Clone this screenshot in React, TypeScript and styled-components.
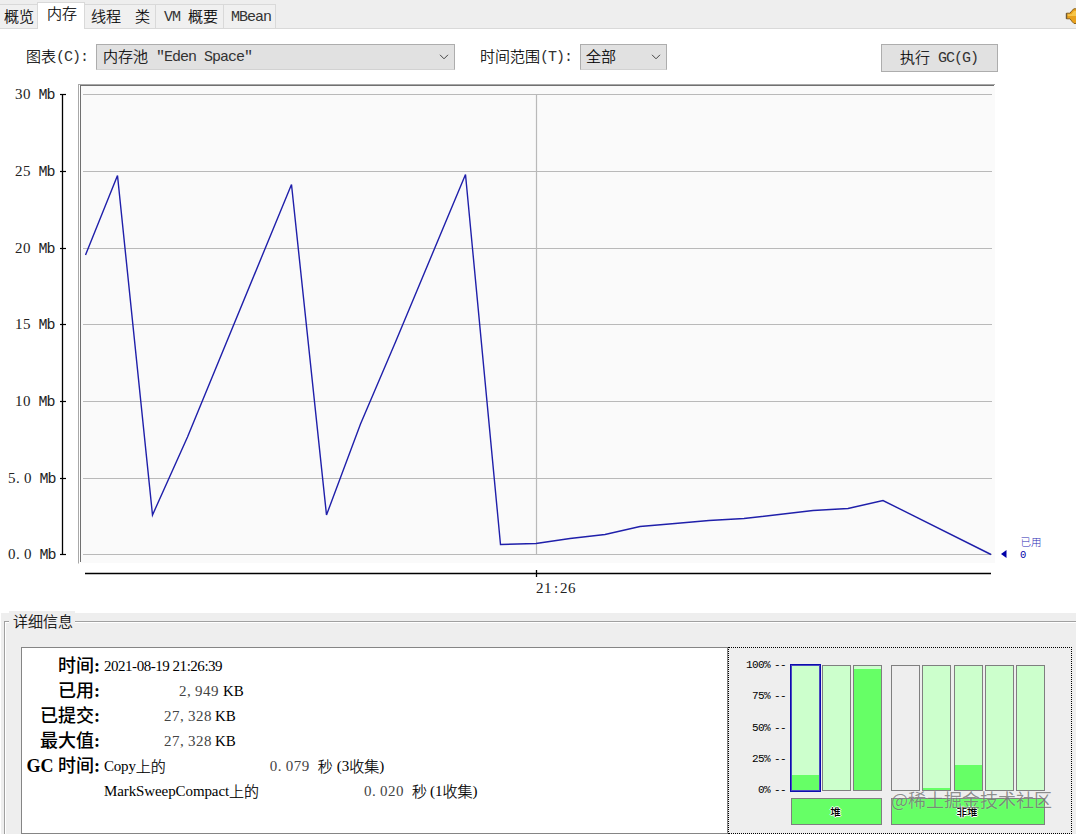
import React from "react";
import styled, { createGlobalStyle } from "styled-components";

const CJK = '"Noto Sans CJK SC", sans-serif';

const GlobalStyle = createGlobalStyle`
  * { box-sizing: border-box; }
  html, body { margin: 0; padding: 0; background: #fff; overflow: hidden; }
  body { font: 15px/20px "Liberation Mono", ${CJK}; color: #111; }
`;

const Window = styled.div`
  width: 1076px;
  height: 834px;
  display: flex;
  flex-direction: column;
  overflow: hidden;
`;

const Cjk = styled.span<{ $gap?: number }>`
  font: 300 15px/20px ${CJK};
  color: #000;
  -webkit-text-stroke: 0.2px #000;
  margin-right: ${(p) => p.$gap ?? 0}px;
  padding-bottom: 2px;
`;

const Latin = styled.span`
  font: 15px/20px "Liberation Mono", monospace;
  letter-spacing: -1px;
  color: #333;
  white-space: pre;
  padding-top: 2px;
`;

const TabBar = styled.div`
  height: 29px;
  flex: none;
  display: flex;
  align-items: flex-end;
  background: #eeeeee;
  border-bottom: 1px solid #d9d9d9;
`;

const Tab = styled.div<{ $width: number; $pad: number; $line?: boolean }>`
  width: ${(p) => p.$width}px;
  height: 24px;
  padding-left: ${(p) => p.$pad}px;
  display: flex;
  align-items: center;
  white-space: pre;
  background: #f0f0f0;
  border-top: 1px solid #d9d9d9;
  border-right: ${(p) => (p.$line ? "1px solid #d9d9d9" : "none")};
`;

const ActiveTab = styled.div`
  width: 48px;
  height: 27px;
  margin-bottom: -1px;
  padding: 0 0 0 9px;
  background: #fff;
  border: 1px solid #d9d9d9;
  border-bottom: none;
`;

const Speaker = styled.svg`
  margin-left: auto;
  margin-bottom: 3px;
  display: block;
`;

const Controls = styled.div`
  height: 55px;
  flex: none;
  display: flex;
  align-items: flex-start;
  padding: 15px 0 0 26px;
`;

const Caption = styled.label<{ $width: number }>`
  width: ${(p) => p.$width}px;
  height: 26px;
  display: flex;
  align-items: center;
`;

const Combo = styled.div<{ $width: number; $gap: number; $pad: number }>`
  width: ${(p) => p.$width}px;
  height: 26px;
  margin-right: ${(p) => p.$gap}px;
  padding: 0 5px 0 ${(p) => p.$pad}px;
  display: flex;
  align-items: center;
  justify-content: space-between;
  background: #e1e1e1;
  border: 1px solid #adadad;
  border-bottom-color: #d2d2d2;
`;

const ComboText = styled.span`
  display: flex;
  align-items: center;
`;

const GcButton = styled.button`
  width: 117px;
  height: 28px;
  padding: 0 1px 0 0;
  display: flex;
  align-items: center;
  justify-content: center;
  background: #e1e1e1;
  border: 1px solid #adadad;
`;

const Chart = styled.svg`
  display: block;
  flex: none;
`;

const Lower = styled.section`
  height: 221px;
  flex: none;
  margin-left: 1px;
  padding: 8px 0 0 3px;
  background: #eeeeee;
`;

const Group = styled.div`
  height: 213px;
  padding: 0 4px 0 16px;
  border-top: 1px solid #a0a0a0;
  border-left: 1px solid #a0a0a0;
  box-shadow: inset 1px 1px 0 #fff;
`;

const GroupTitle = styled.div`
  width: 66px;
  height: 18px;
  margin: -11px 0 0 -12px;
  padding-left: 4px;
  line-height: 18px;
  background: #eeeeee;
  white-space: nowrap;
`;

const GroupBody = styled.div`
  margin-top: 18px;
  display: flex;
`;

const Details = styled.div`
  width: 707px;
  height: 187px;
  padding: 6px 0 0 4px;
  background: #fff;
  border: 1px solid #858585;
`;

const Row = styled.div`
  height: 25px;
  display: flex;
  align-items: center;
`;

const RowLabel = styled.div`
  width: 74px;
  margin-right: 4px;
  padding-bottom: 2px;
  display: flex;
  align-items: center;
  justify-content: flex-end;
  white-space: pre;
  font: 700 18px/24px "Liberation Serif", "Noto Sans CJK SC", serif;
  color: #000;
`;

const LabelCjk = styled.span`
  font: 500 18px/24px ${CJK};
  padding-bottom: 3px;
`;

const Serif = styled.span<{ $tight?: number }>`
  font: 15px/24px "Liberation Serif", serif;
  letter-spacing: ${(p) => p.$tight ?? 0}px;
  padding-bottom: 1px;
  color: #000;
`;

const Digits = styled.span<{ $left: number; $gap: number }>`
  margin-left: ${(p) => p.$left}px;
  margin-right: ${(p) => p.$gap}px;
  padding-bottom: 1px;
  display: flex;
  font: 15px/24px "Liberation Serif", serif;
  color: #444;
`;

const Digit = styled.span`
  width: 8px;
`;

const Pools = styled.div`
  position: relative;
  width: 344px;
  height: 187px;
  padding: 16px 0 0 16px;
  display: flex;
  border: 1px dotted #000;
`;

const Scale = styled.div`
  width: 46px;
  height: 144px;
  margin-top: -8px;
`;

const ScaleMark = styled.div`
  height: 31.25px;
  display: flex;
  justify-content: flex-end;
  padding-right: 5px;
  font: 11px/18px "Liberation Mono", monospace;
  letter-spacing: -0.6px;
  white-space: nowrap;
  color: #000;
`;

const ScaleDash = styled.span`
  margin-left: 4px;
  white-space: nowrap;
`;

const PoolGroup = styled.div<{ $width: number }>`
  width: ${(p) => p.$width}px;
  margin: 1px 9px 0 0;
`;

const Bars = styled.div`
  height: 126px;
  display: flex;
  justify-content: space-between;
`;

const Bar = styled.div<{ $empty?: boolean; $selected?: boolean }>`
  position: relative;
  z-index: ${(p) => (p.$selected ? 1 : 0)};
  width: 29px;
  height: 126px;
  display: flex;
  align-items: flex-end;
  border: 1px solid ${(p) => (p.$selected ? "#4a4ac0" : "#7f7f7f")};
  background: ${(p) => (p.$empty ? "#eeeeee" : "#ccffcc")};
  box-shadow: ${(p) => (p.$selected ? "0 0 0 1px #0c0cae" : "none")};
`;

const Fill = styled.div`
  width: 100%;
  background: #66ff66;
`;

const PoolLabel = styled.div`
  height: 27px;
  margin-top: 7px;
  padding-right: 2px;
  display: flex;
  align-items: center;
  justify-content: center;
  background: #66ff66;
  border: 1px solid #7f7f7f;
  font: 500 10.5px/12px ${CJK};
  color: #000;
  text-shadow: 1px 0 #fff, -1px 0 #fff, 0 1px #fff, 0 -1px #fff;
`;

const Watermark = styled.div`
  position: absolute;
  left: 162px;
  top: 139px;
  font: 400 18px/24px ${CJK};
  white-space: nowrap;
  color: rgba(70, 70, 70, 0.6);
  text-shadow: 0 0 1px rgba(255, 255, 255, 0.6);
`;

const Chevron = () => (
  <svg width="10" height="6" viewBox="0 0 10 6" fill="none" stroke="#444">
    <path d="M1 0.8 5 4.8 9 0.8" />
  </svg>
);

const gridY = [94.5, 171.5, 248.5, 324.5, 401.5, 478.5, 554.5];
const ticks = ["30", "25", "20", "15", "10", "5.0", "0.0"];
const series =
  "85.5,255 117.5,175.5 152.5,515 187.5,437 291.5,184.5 326.5,515 360.5,424 395.5,342 465.5,174.5 500.5,544.5 536,543.5 570,538.5 605,534.5 640,526.5 675,523.5 709,520.5 744,518.5 779,514.5 813,510.5 848,508.5 883,500.5 991,554.5";

const MemoryChart = () => (
  <Chart width="1076" height="529" viewBox="0 84 1076 529">
    <rect x="81" y="86" width="914" height="477" fill="#fafafa" />
    <path d="M78 84.5H995M78.5 84V563.5" stroke="#a8a8a8" />
    <path d="M80 85.5H994M80.5 85V562" stroke="#707070" />
    {gridY.map((y) => (
      <path key={y} d={`M83 ${y}H992`} stroke="#b9b9b9" strokeWidth="1.2" />
    ))}
    <path d="M536.5 94V554" stroke="#b9b9b9" strokeWidth="1.2" />
    <path d="M62.5 94V555" stroke="#000" strokeWidth="1.3" />
    {gridY.map((y) => (
      <path key={y} d={`M60 ${y}H66`} stroke="#000" strokeWidth="1.2" />
    ))}
    {ticks.map((t, i) => {
      const x0 = t.length === 2 ? 15 : 8;
      const xs = t.split("").map((_, n) => x0 + n * 8).join(" ");
      return (
        <g key={t} fill="#222">
          <text x={xs} y={gridY[i] + 4.5} fontFamily="Liberation Serif" fontSize="15">
            {t}
          </text>
          <text
            x={x0 + t.length * 8 + 7.5}
            y={gridY[i] + 4.5}
            fontFamily="Liberation Mono"
            fontSize="15"
            letterSpacing="-1"
          >
            Mb
          </text>
        </g>
      );
    })}
    <path d="M85 573.5H991M536.5 570V577" stroke="#000" strokeWidth="1.3" />
    <text x="536 544 554 560 568" y="593" fontFamily="Liberation Serif" fontSize="15" fill="#222">
      21:26
    </text>
    <polyline points={series} fill="none" stroke="#1f1faa" strokeWidth="1.4" />
    <path d="M1001 554 1006.5 550V558Z" fill="#0000a8" />
    <text x="1020.5" y="545.5" fontFamily="Noto Sans CJK SC" fontWeight="300" fontSize="10.5" fill="#2a2ab4">
      已用
    </text>
    <text x="1020" y="558" fontFamily="Liberation Mono" fontSize="10.5" fill="#0000a8">
      0
    </text>
  </Chart>
);

const Number = ({ value, left, gap }: { value: string; left: number; gap: number }) => (
  <Digits $left={left} $gap={gap}>
    {value.split("").map((c, i) => (
      <Digit key={i}>{c}</Digit>
    ))}
  </Digits>
);

const Label = ({ latin, text }: { latin?: string; text: string }) => (
  <RowLabel>
    {latin}
    <LabelCjk>{text}</LabelCjk>:
  </RowLabel>
);

const Pool = ({ level, empty, selected }: { level: number; empty?: boolean; selected?: boolean }) => (
  <Bar $empty={empty} $selected={selected}>
    <Fill style={{ height: level }} />
  </Bar>
);

export default function App() {
  return (
    <Window>
      <GlobalStyle />
      <TabBar>
        <Tab $width={37} $pad={4}><Cjk>概览</Cjk></Tab>
        <ActiveTab><Cjk>内存</Cjk></ActiveTab>
        <Tab $width={49} $pad={6}><Cjk>线程</Cjk></Tab>
        <Tab $width={22} $pad={1} $line><Cjk>类</Cjk></Tab>
        <Tab $width={68} $pad={8} $line><Latin>VM </Latin><Cjk>概要</Cjk></Tab>
        <Tab $width={52} $pad={7} $line><Latin>MBean</Latin></Tab>
        <Speaker width="11" height="18" viewBox="0 0 11 18">
          <path d="M1.5 6.2H5L7 3.5 9 1.8H13V16.5H9L7 14.5 5 11.8H1.5Z" fill="#e9a11c" stroke="#8a6420" />
          <path d="M2.5 7.2H6.5L9 4H11V9H2.5Z" fill="#f7c64a" />
          <path d="M1.5 6.2V11.8" stroke="#6e5a3a" strokeWidth="1.4" />
        </Speaker>
      </TabBar>
      <Controls>
        <Caption $width={70}><Cjk>图表</Cjk><Latin>(C):</Latin></Caption>
        <Combo $width={359} $gap={25} $pad={6}>
          <ComboText><Cjk>内存池</Cjk><Latin>{' "Eden Space"'}</Latin></ComboText>
          <Chevron />
        </Combo>
        <Caption $width={100}><Cjk>时间范围</Cjk><Latin>(T):</Latin></Caption>
        <Combo $width={87} $gap={214} $pad={5}>
          <Cjk>全部</Cjk>
          <Chevron />
        </Combo>
        <GcButton><Cjk>执行</Cjk><Latin>{" GC(G)"}</Latin></GcButton>
      </Controls>
      <MemoryChart />
      <Lower>
        <Group>
          <GroupTitle><Cjk>详细信息</Cjk></GroupTitle>
          <GroupBody>
            <Details>
              <Row><Label text="时间" /><Serif $tight={-0.47}>2021-08-19 21:26:39</Serif></Row>
              <Row><Label text="已用" /><Number value="2,949" left={75} gap={4} /><Serif>KB</Serif></Row>
              <Row><Label text="已提交" /><Number value="27,328" left={60} gap={3} /><Serif>KB</Serif></Row>
              <Row><Label text="最大值" /><Number value="27,328" left={60} gap={3} /><Serif>KB</Serif></Row>
              <Row>
                <Label latin="GC " text="时间" />
                <Serif $tight={-0.2}>Copy</Serif><Cjk>上的</Cjk>
                <Number value="0.079" left={104} gap={8} />
                <Cjk $gap={4}>秒</Cjk><Serif>(3</Serif><Cjk>收集</Cjk><Serif>)</Serif>
              </Row>
              <Row>
                <RowLabel />
                <Serif $tight={-0.1}>MarkSweepCompact</Serif><Cjk>上的</Cjk>
                <Number value="0.020" left={105} gap={8} />
                <Cjk $gap={3}>秒</Cjk><Serif>(1</Serif><Cjk>收集</Cjk><Serif>)</Serif>
              </Row>
            </Details>
            <Pools>
              <Scale>
                {["100%", "75%", "50%", "25%", "0%"].map((s) => (
                  <ScaleMark key={s}>{s}<ScaleDash>--</ScaleDash></ScaleMark>
                ))}
              </Scale>
              <PoolGroup $width={91}>
                <Bars>
                  <Pool level={15} selected />
                  <Pool level={0} />
                  <Pool level={121} />
                </Bars>
                <PoolLabel>堆</PoolLabel>
              </PoolGroup>
              <PoolGroup $width={154}>
                <Bars>
                  <Pool level={0} empty />
                  <Pool level={2} />
                  <Pool level={25} />
                  <Pool level={0} />
                  <Pool level={0} />
                </Bars>
                <PoolLabel>非堆</PoolLabel>
              </PoolGroup>
              <Watermark>@稀土掘金技术社区</Watermark>
            </Pools>
          </GroupBody>
        </Group>
      </Lower>
    </Window>
  );
}
